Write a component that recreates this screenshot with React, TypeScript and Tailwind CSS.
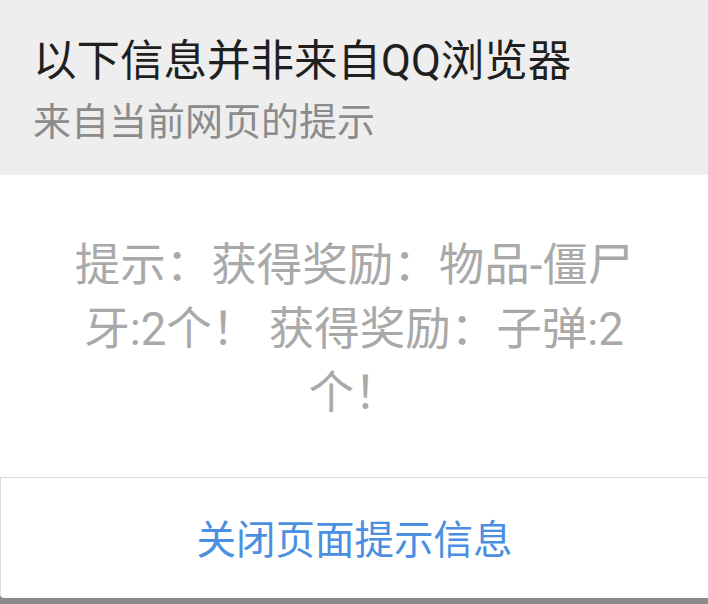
export default function App() {
  return (
    <div
      className="w-[708px] h-[604px] bg-[#8a8a8a] flex flex-col overflow-hidden"
      style={{ fontFamily: 'Roboto, "Noto Sans CJK SC", sans-serif' }}
    >
      {/* header */}
      <div className="h-[175px] shrink-0 bg-[#eeeeee] pl-[33px] pt-[36px] flex flex-col gap-[11px]">
        <h1 className="text-[43.5px] leading-[52px] text-[#1f1f1f] font-normal">
          以下信息并非来自QQ浏览器
        </h1>
        <p className="text-[38px] leading-[46px] text-[#8b8b8b]">
          来自当前网页的提示
        </p>
      </div>

      {/* message */}
      <div className="h-[302px] shrink-0 bg-white flex justify-center pt-[59px]">
        <p className="w-[590px] text-center text-[45.5px] leading-[64px] text-[#a9a9a9]">
          提示：获得奖励：物品-僵尸牙:2个！ 获得奖励：子弹:2个！
        </p>
      </div>

      {/* button */}
      <div className="h-[121px] shrink-0 bg-white border-t border-l border-[#dcdcdc] rounded-bl-[4px] flex items-center justify-center pt-[5px]">
        <button className="text-[39.5px] leading-[46px] text-[#4b8fe0]">
          关闭页面提示信息
        </button>
      </div>
    </div>
  );
}
